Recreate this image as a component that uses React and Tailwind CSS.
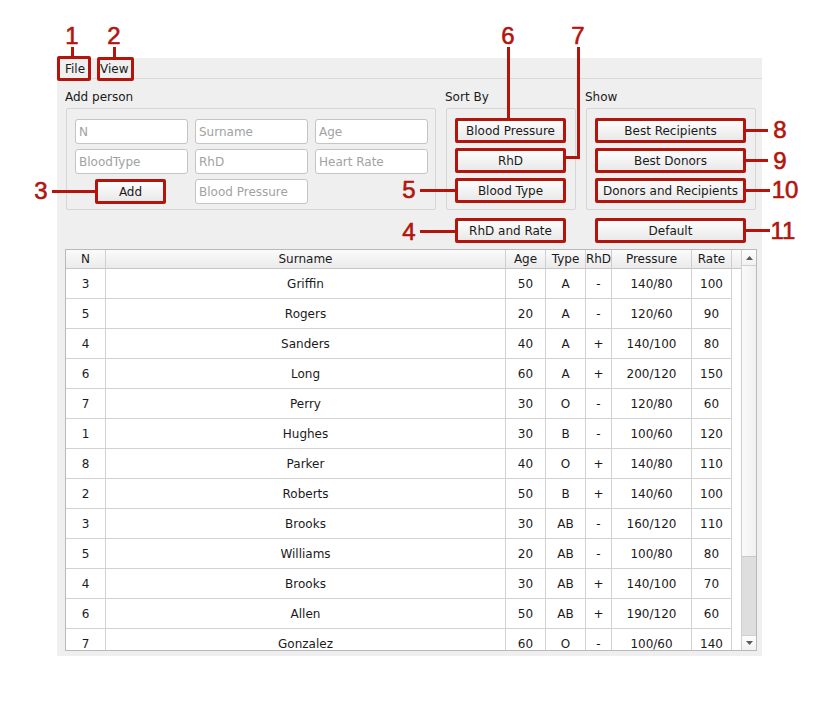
import React from "react";

const RED = "border-[#b3150d]";

const rows = [
    ["3", "Griffin", "50", "A", "-", "140/80", "100"],
    ["5", "Rogers", "20", "A", "-", "120/60", "90"],
    ["4", "Sanders", "40", "A", "+", "140/100", "80"],
    ["6", "Long", "60", "A", "+", "200/120", "150"],
    ["7", "Perry", "30", "O", "-", "120/80", "60"],
    ["1", "Hughes", "30", "B", "-", "100/60", "120"],
    ["8", "Parker", "40", "O", "+", "140/80", "110"],
    ["2", "Roberts", "50", "B", "+", "140/60", "100"],
    ["3", "Brooks", "30", "AB", "-", "160/120", "110"],
    ["5", "Williams", "20", "AB", "-", "100/80", "80"],
    ["4", "Brooks", "30", "AB", "+", "140/100", "70"],
    ["6", "Allen", "50", "AB", "+", "190/120", "60"],
    ["7", "Gonzalez", "60", "O", "-", "100/60", "140"],
];

const headers = ["N", "Surname", "Age", "Type", "RhD", "Pressure", "Rate"];
const cols = "grid grid-cols-[40px_400px_40px_40px_26px_80px_40px]";

// annotation numbers, centred on their point
const marks = [
    { n: "1", cls: "left-[72px] top-[36px]" },
    { n: "2", cls: "left-[114px] top-[36px]" },
    { n: "3", cls: "left-[41px] top-[191px]" },
    { n: "4", cls: "left-[409px] top-[232px]" },
    { n: "5", cls: "left-[409px] top-[190px]" },
    { n: "6", cls: "left-[508px] top-[36px]" },
    { n: "7", cls: "left-[578px] top-[36px]" },
    { n: "8", cls: "left-[780px] top-[130px]" },
    { n: "9", cls: "left-[780px] top-[161px]" },
    { n: "10", cls: "left-[785px] top-[190px]" },
    { n: "11", cls: "left-[783px] top-[231px]" },
];

const lines = [
    "left-[71px] top-[47px] w-[3px] h-[10px]",
    "left-[113px] top-[47px] w-[3px] h-[10px]",
    "left-[52px] top-[190px] w-[43px] h-[3px]",
    "left-[420px] top-[230px] w-[35px] h-[3px]",
    "left-[420px] top-[189px] w-[35px] h-[3px]",
    "left-[507px] top-[47px] w-[3px] h-[71px]",
    "left-[577px] top-[47px] w-[3px] h-[112px]",
    "left-[565px] top-[156px] w-[15px] h-[3px]",
    "left-[745px] top-[129px] w-[23px] h-[3px]",
    "left-[745px] top-[159px] w-[23px] h-[3px]",
    "left-[745px] top-[189px] w-[25px] h-[3px]",
    "left-[745px] top-[229px] w-[25px] h-[3px]",
];

function Field({ placeholder }) {
    return (
        <div className="w-[113px] h-[25px] bg-white border border-[#c4c4c4] rounded-[3px] px-[3px] flex items-center text-[#a2a2a2] text-[12px]">
            {placeholder}
        </div>
    );
}

function Btn({ children, w = "w-[111px]" }) {
    return (
        <div className={`${w} h-[25px] border-[3px] ${RED} rounded-[2px] bg-gradient-to-b from-[#fdfdfd] to-[#e9e9e9] flex items-center justify-center text-[12px] text-[#1a1a1a]`}>
            {children}
        </div>
    );
}

function Group({ children, w }) {
    return (
        <div className={`${w} h-[102px] border border-[#d6d6d6] rounded-[2px] pl-[8px] pt-[9px]`}>
            {children}
        </div>
    );
}

export default function App() {
    return (
        <div className="relative w-[820px] h-[720px] bg-white pt-[58px] pl-[57px] font-['DejaVu_Sans',sans-serif] text-[12px] text-[#1a1a1a]">
            <div className="w-[705px] h-[598px] bg-[#efefef] flex flex-col">
                {/* Menu bar */}
                <div className="h-[21px] border-b border-[#d9d9d9] flex items-center pt-[1px]">
                    <span className="ml-[8px]">File</span>
                    <span className="ml-[15px]">View</span>
                </div>

                <div className="px-[8px] pt-[10px]">
                    <div className="flex">
                        {/* Add person */}
                        <div className="w-[371px]">
                            <div className="h-[19px] leading-[16px]">Add person</div>
                            <div className="ml-[1px] w-[370px] h-[102px] border border-[#d6d6d6] rounded-[2px] pl-[8px] pt-[10px]">
                                <div className="grid grid-cols-[113px_113px_113px] gap-x-[7px] gap-y-[5px]">
                                    <Field placeholder="N" />
                                    <Field placeholder="Surname" />
                                    <Field placeholder="Age" />
                                    <Field placeholder="BloodType" />
                                    <Field placeholder="RhD" />
                                    <Field placeholder="Heart Rate" />
                                    <div className="pl-[20px]">
                                        <Btn w="w-[71px]">Add</Btn>
                                    </div>
                                    <Field placeholder="Blood Pressure" />
                                </div>
                            </div>
                        </div>

                        {/* Sort by */}
                        <div className="ml-[9px] w-[131px]">
                            <div className="h-[19px] leading-[16px]">Sort By</div>
                            <div className="ml-[1px]">
                                <Group w="w-[130px]">
                                    <div className="flex flex-col gap-[5px]">
                                        <Btn>Blood Pressure</Btn>
                                        <Btn>RhD</Btn>
                                        <Btn>Blood Type</Btn>
                                    </div>
                                </Group>
                            </div>
                        </div>

                        {/* Show */}
                        <div className="ml-[9px] w-[171px]">
                            <div className="h-[19px] leading-[16px]">Show</div>
                            <div className="ml-[1px]">
                                <Group w="w-[170px]">
                                    <div className="flex flex-col gap-[5px]">
                                        <Btn w="w-[151px]">Best Recipients</Btn>
                                        <Btn w="w-[151px]">Best Donors</Btn>
                                        <Btn w="w-[151px]">Donors and Recipients</Btn>
                                    </div>
                                </Group>
                            </div>
                        </div>
                    </div>

                    <div className="flex mt-[8px] pl-[390px]">
                        <Btn>RhD and Rate</Btn>
                        <div className="ml-[29px]">
                            <Btn w="w-[151px]">Default</Btn>
                        </div>
                    </div>

                    {/* Table */}
                    <div className="mt-[6px] w-[692px] h-[402px] border border-[#b9b9b9] bg-white flex overflow-hidden">
                        <div className="w-[675px] h-full overflow-hidden">
                            <div className="flex h-[19px] bg-gradient-to-b from-[#fbfbfb] to-[#ebebeb] border-b border-[#c6c6c6]">
                                <div className={cols}>
                                    {headers.map((h) => (
                                        <div key={h} className="h-[18px] border-r border-[#cfcfcf] flex items-center justify-center overflow-hidden whitespace-nowrap">
                                            {h}
                                        </div>
                                    ))}
                                </div>
                            </div>
                            {rows.map((r, i) => (
                                <div key={i} className={cols}>
                                    {r.map((c, j) => (
                                        <div key={j} className="h-[30px] border-r border-b border-[#d2d2d2] flex items-center justify-center">
                                            {c}
                                        </div>
                                    ))}
                                </div>
                            ))}
                        </div>

                        {/* Scrollbar */}
                        <div className="w-[15px] h-full border-l border-[#cfcfcf] bg-[#dedede] flex flex-col">
                            <div className="h-[16px] bg-gradient-to-b from-[#fdfdfd] to-[#f1f1f1] border-b border-[#d0d0d0] flex items-center justify-center">
                                <svg width="7" height="4" viewBox="0 0 7 4"><path d="M0 4 L3.5 0 L7 4 Z" fill="#5a5a5a" /></svg>
                            </div>
                            <div className="h-[291px] bg-gradient-to-r from-[#fafafa] to-[#f0f0f0] border-b border-[#c8c8c8]" />
                            <div className="flex-1" />
                            <div className="h-[15px] bg-gradient-to-b from-[#fdfdfd] to-[#f1f1f1] border-t border-[#d0d0d0] flex items-center justify-center">
                                <svg width="7" height="4" viewBox="0 0 7 4"><path d="M0 0 L7 0 L3.5 4 Z" fill="#5a5a5a" /></svg>
                            </div>
                        </div>
                    </div>
                </div>
            </div>

            {/* Annotations */}
            <div className="absolute inset-0 pointer-events-none">
                <div className={`absolute left-[57px] top-[56px] w-[34px] h-[25px] border-[3px] ${RED} rounded-[2px]`} />
                <div className={`absolute left-[97px] top-[57px] w-[37px] h-[24px] border-[3px] ${RED} rounded-[2px]`} />
                {lines.map((l, i) => (
                    <div key={i} className={`absolute bg-[#b3150d] ${l}`} />
                ))}
                {marks.map((m) => (
                    <div
                        key={m.n}
                        className={`absolute -translate-x-1/2 -translate-y-1/2 font-['Liberation_Sans',sans-serif] text-[24px] leading-none text-[#b3150d] [-webkit-text-stroke:0.6px_#b3150d] ${m.cls}`}
                    >
                        {m.n}
                    </div>
                ))}
            </div>
        </div>
    );
}
